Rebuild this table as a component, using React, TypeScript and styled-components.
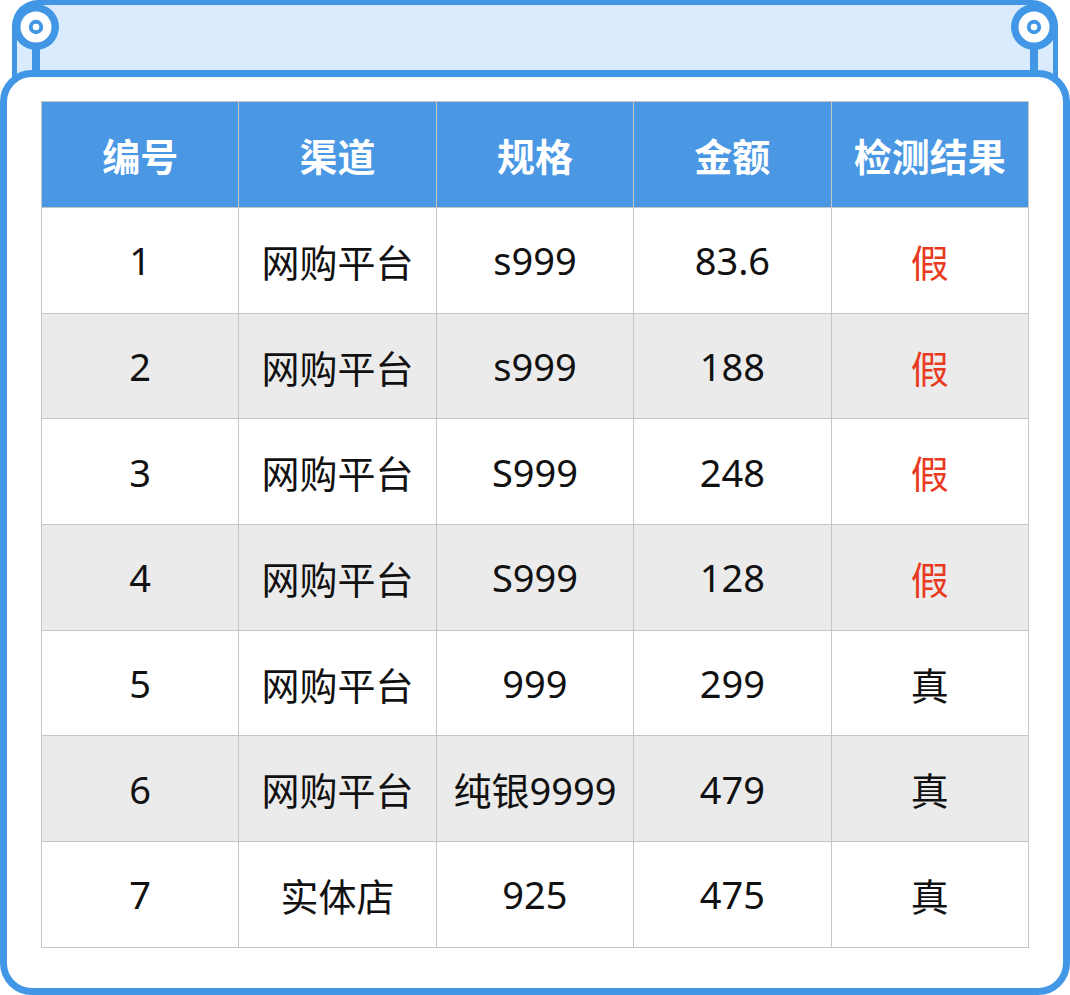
import styled, { createGlobalStyle } from 'styled-components';

const rows = [
  { id: '1', channel: '网购平台', spec: 's999', price: '83.6', result: '假' },
  { id: '2', channel: '网购平台', spec: 's999', price: '188', result: '假' },
  { id: '3', channel: '网购平台', spec: 'S999', price: '248', result: '假' },
  { id: '4', channel: '网购平台', spec: 'S999', price: '128', result: '假' },
  { id: '5', channel: '网购平台', spec: '999', price: '299', result: '真' },
  { id: '6', channel: '网购平台', spec: '纯银9999', price: '479', result: '真' },
  { id: '7', channel: '实体店', spec: '925', price: '475', result: '真' },
];

const headers = ['编号', '渠道', '规格', '金额', '检测结果'];

function Knob() {
  return (
    <svg width="50" height="74" viewBox="0 0 50 74">
      <rect x="21" y="40" width="8" height="34" fill="#4197e6" />
      <circle cx="25" cy="25" r="23" fill="#4197e6" />
      <circle cx="25" cy="25" r="15.5" fill="#ffffff" />
      <circle cx="25" cy="25" r="7.2" fill="#4197e6" />
      <circle cx="25" cy="25" r="3.3" fill="#ffffff" />
    </svg>
  );
}

export default function App() {
  return (
    <>
      <GlobalStyle />
      <Page>
        <Banner>
          <LeftKnob>
            <Knob />
          </LeftKnob>
          <RightKnob>
            <Knob />
          </RightKnob>
        </Banner>
        <Card>
          <Table>
            <thead>
              <tr>
                {headers.map((h) => (
                  <HeadCell key={h}>{h}</HeadCell>
                ))}
              </tr>
            </thead>
            <tbody>
              {rows.map((r, i) => (
                <Row key={r.id} striped={i % 2 === 1}>
                  <Cell>{r.id}</Cell>
                  <Cell>{r.channel}</Cell>
                  <Cell>{r.spec}</Cell>
                  <Cell>{r.price}</Cell>
                  <Cell fake={r.result === '假'}>{r.result}</Cell>
                </Row>
              ))}
            </tbody>
          </Table>
        </Card>
      </Page>
    </>
  );
}

const GlobalStyle = createGlobalStyle`
  body {
    margin: 0;
    background: #ffffff;
    font-family: "Noto Sans", "Noto Sans CJK SC", sans-serif;
  }
`;

const Page = styled.div`
  width: 1070px;
  height: 995px;
  display: flex;
  flex-direction: column;
`;

const Banner = styled.div`
  position: relative;
  height: 78px;
  margin: 0 12px;
  box-sizing: border-box;
  background: #d9ebfc;
  border: 5px solid #4197e6;
  border-bottom: none;
  border-radius: 26px 26px 0 0;
`;

const LeftKnob = styled.div`
  position: absolute;
  left: -6px;
  top: -3px;
  line-height: 0;
`;

const RightKnob = styled.div`
  position: absolute;
  right: -6px;
  top: -3px;
  line-height: 0;
`;

const Card = styled.div`
  position: relative;
  flex: 1;
  margin-top: -8px;
  box-sizing: border-box;
  background: #ffffff;
  border: 7px solid #4197e6;
  border-radius: 32px;
  padding: 24px 34px 0;
`;

const Table = styled.table`
  width: 988px;
  border-collapse: collapse;
  table-layout: fixed;
`;

const HeadCell = styled.th`
  height: 105px;
  padding: 0;
  background: #4a97e4;
  color: #ffffff;
  font-size: 38px;
  font-weight: 700;
  border: 1px solid #c6c6c6;
  text-align: center;
`;

const Row = styled.tr<{ striped: boolean }>`
  background: ${(p) => (p.striped ? '#ebebeb' : '#ffffff')};
`;

const Cell = styled.td<{ fake?: boolean }>`
  height: 104.7px;
  padding: 0;
  border: 1px solid #c6c6c6;
  text-align: center;
  font-size: 38px;
  font-weight: 400;
  color: ${(p) => (p.fake ? '#e83a1e' : '#111111')};
`;
